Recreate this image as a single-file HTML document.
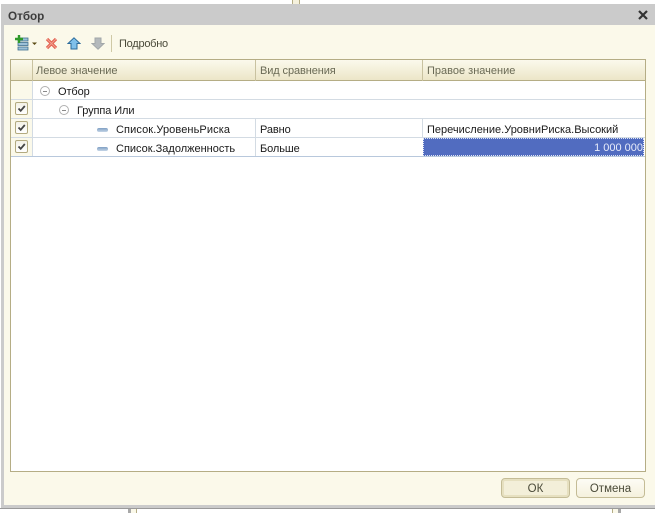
<!DOCTYPE html>
<html><head><meta charset="utf-8">
<style>
html,body{margin:0;padding:0;background:#fff}
body{width:655px;height:513px;position:relative;overflow:hidden;font-family:"Liberation Sans",sans-serif;font-size:11px;color:#1a1a1a}
.a{position:absolute}
.t{position:absolute;white-space:nowrap;line-height:14px}
.rowline{position:absolute;left:11px;width:634px;height:1px;background:#d3dbe3}
.vl{position:absolute;width:1px}
.cb{position:absolute;left:15px;width:11px;height:11px;border:1px solid #b3aa80;border-radius:2px;background:linear-gradient(#f3f1e6,#fff)}
.cb svg{position:absolute;left:0;top:0}
.minus{position:absolute;width:8px;height:8px;border:1px solid #b0b0b0;border-radius:50%;background:#fff}
.minus:after{content:"";position:absolute;left:2px;top:3.5px;width:4px;height:1px;background:#8a8a8a}
.dash{position:absolute;width:11px;height:4px;background:linear-gradient(#7f9fc4,#c4d5e6);border-radius:2px;border:0}
.btn{position:absolute;top:478px;height:18px;border:1px solid #c4bc96;border-radius:4px;text-align:center;line-height:20px;font-size:11.5px;color:#4a4a38;background:linear-gradient(#fdfcf5,#f5f1dd)}
</style></head><body>
<div class="a" style="top:0;height:4px;background:#f5f1dd;border-left:1px solid #b5ad85;border-right:1px solid #b5ad85;box-sizing:border-box;left:292px;width:8px"></div>
<div class="a" style="left:128px;top:509px;width:9px;height:4px;background:#fbf9ea;border-left:3px solid #a8a8a8;border-right:1px solid #b5ad85;box-sizing:border-box"></div>
<div class="a" style="top:509px;width:9px;height:4px;background:#fbf9ea;border-left:1px solid #b5ad85;border-right:3px solid #a8a8a8;box-sizing:border-box;left:612px"></div>

<div class="a" style="left:1px;top:4px;width:654px;height:504px;background:#cbcbcb"></div>
<div class="a" style="left:0;top:508px;width:655px;height:1px;background:#9a9a9a"></div>
<div class="a" style="left:4px;top:25px;width:651px;height:480px;background:#fbf9ea"></div>

<div class="t" style="left:8px;top:10px;font-weight:bold;font-size:11.7px;color:#3d3d3d">Отбор</div>
<svg class="a" style="left:638px;top:10px" width="10" height="10" viewBox="0 0 10 10"><path d="M1 1L9 9M9 1L1 9" stroke="#333" stroke-width="2.2" fill="none"/></svg>

<!-- toolbar -->
<svg class="a" style="left:14px;top:35px" width="24" height="16" viewBox="0 0 24 16">
<rect x="4" y="3" width="10" height="3" fill="#9cc0d8" stroke="#3f6f92" stroke-width=".8"/>
<rect x="4" y="7.5" width="10" height="3" fill="#9cc0d8" stroke="#3f6f92" stroke-width=".8"/>
<rect x="4" y="12" width="10" height="3" fill="#9cc0d8" stroke="#3f6f92" stroke-width=".8"/>
<path d="M5 0V8M1 4H9" stroke="#2f9a2a" stroke-width="2.4" fill="none"/>
<path d="M18 7.5H23L20.5 10Z" fill="#5a4a14"/>
</svg>
<svg class="a" style="left:45px;top:37px" width="13" height="13" viewBox="0 0 13 13"><path d="M2 2L11 11M11 2L2 11" stroke="#e4604f" stroke-width="3.2" fill="none"/><path d="M2 2L11 11M11 2L2 11" stroke="#f0a090" stroke-width="1" fill="none"/></svg>
<svg class="a" style="left:67px;top:37px" width="14" height="13" viewBox="0 0 14 13"><path d="M7 .8L13 6.5H10V12H4V6.5H1Z" fill="#7fc0ea" stroke="#2b6a9a" stroke-width="1"/></svg>
<svg class="a" style="left:91px;top:37px" width="14" height="13" viewBox="0 0 14 13"><path d="M7 12.2L13 6.5H10V1H4V6.5H1Z" fill="#b4b9bc" stroke="#a2a7a9" stroke-width="1"/></svg>
<div class="a" style="left:111px;top:35px;width:1px;height:17px;background:#cfc9a6"></div>
<div class="t" style="left:119px;top:37px;color:#4a4a3a;letter-spacing:-.25px">Подробно</div>

<!-- grid -->
<div class="a" style="left:10px;top:59px;width:634px;height:411px;background:#fff;border:1px solid #b5ad85"></div>
<div class="a" style="left:11px;top:60px;width:634px;height:20px;background:linear-gradient(#fbf9ec,#ece6c8)"></div>
<div class="a" style="left:11px;top:80px;width:634px;height:1px;background:#b5ad85"></div>
<div class="a" style="left:11px;top:81px;width:21px;height:75px;background:#fbf9ea"></div>
<div class="vl" style="left:32px;top:60px;height:21px;background:#c9c2a0"></div>
<div class="vl" style="left:255px;top:60px;height:21px;background:#c9c2a0"></div>
<div class="vl" style="left:422px;top:60px;height:21px;background:#c9c2a0"></div>
<div class="vl" style="left:32px;top:81px;height:76px;background:#d3dbe3"></div>
<div class="vl" style="left:255px;top:119px;height:38px;background:#d3dbe3"></div>
<div class="vl" style="left:422px;top:119px;height:19px;background:#d3dbe3"></div>
<div class="rowline" style="top:99px"></div>
<div class="rowline" style="top:118px"></div>
<div class="rowline" style="top:137px"></div>
<div class="rowline" style="top:156px;background:#b8c8dc"></div>

<div class="t" style="left:36px;top:64px;color:#6a6a55">Левое значение</div>
<div class="t" style="left:260px;top:64px;color:#6a6a55;letter-spacing:-.1px">Вид сравнения</div>
<div class="t" style="left:427px;top:64px;color:#6a6a55">Правое значение</div>

<div class="minus" style="left:40px;top:86px"></div>
<div class="t" style="left:58px;top:85px;letter-spacing:-.1px">Отбор</div>
<div class="minus" style="left:59px;top:105px"></div>
<div class="t" style="left:77px;top:104px;letter-spacing:-.1px">Группа Или</div>
<div class="dash" style="left:97px;top:128px"></div>
<div class="t" style="left:116px;top:123px;letter-spacing:.1px">Список.УровеньРиска</div>
<div class="dash" style="left:97px;top:147px"></div>
<div class="t" style="left:116px;top:142px">Список.Задолженность</div>
<div class="t" style="left:260px;top:123px;letter-spacing:-.1px">Равно</div>
<div class="t" style="left:260px;top:142px;letter-spacing:-.1px">Больше</div>
<div class="t" style="left:427px;top:123px">Перечисление.УровниРиска.Высокий</div>

<div class="cb" style="top:102px"><svg width="11" height="11" viewBox="0 0 11 11"><path d="M2.5 5.5L4.7 7.8L8.8 3" stroke="#444" stroke-width="1.8" fill="none"/></svg></div>
<div class="cb" style="top:121px"><svg width="11" height="11" viewBox="0 0 11 11"><path d="M2.5 5.5L4.7 7.8L8.8 3" stroke="#444" stroke-width="1.8" fill="none"/></svg></div>
<div class="cb" style="top:140px"><svg width="11" height="11" viewBox="0 0 11 11"><path d="M2.5 5.5L4.7 7.8L8.8 3" stroke="#444" stroke-width="1.8" fill="none"/></svg></div>

<div class="a" style="left:423px;top:138px;width:221px;height:18px;background:#516cc0;box-sizing:border-box;border:1px dotted #dfe5f5"></div>
<div class="t" style="right:12px;top:141px;color:#e8ecfa">1 000 000</div>

<div class="btn" style="left:501px;width:67px;box-shadow:inset 0 0 0 2px #e6e0c0;background:#f3efd9">ОК</div>
<div class="btn" style="left:576px;width:67px">Отмена</div>
</body></html>
